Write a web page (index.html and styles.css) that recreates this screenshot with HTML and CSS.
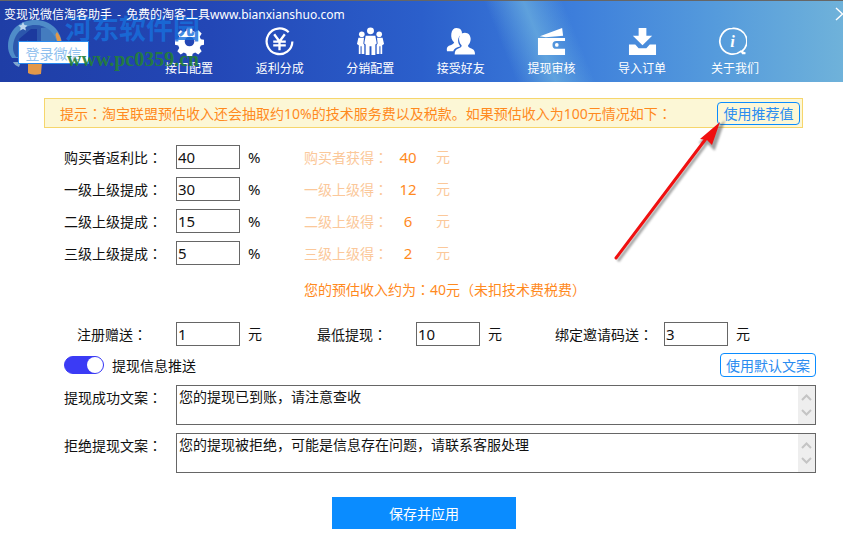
FILE: index.html
```html
<!DOCTYPE html>
<html lang="zh-CN">
<head>
<meta charset="utf-8">
<title>变现说微信淘客助手</title>
<link rel="stylesheet" href="styles.css">
</head>
<body>
<div class="app">
  <header class="header">
    <div class="title-row">
      <span class="title">变现说微信淘客助手 - 免费的淘客工具www.bianxianshuo.com</span>
      <svg class="close" width="8" height="14" viewBox="0 0 8 14"><path d="M1 1l6.500 6L1 13" fill="none" stroke="#fff" stroke-width="1.400"/></svg>
    </div>
    <div class="header-body">
      <svg class="logo" width="60" height="58" viewBox="0 0 60 58">
        <path d="M3 28C3 12 15 2 30 2s27 10 27 26c0 5-1 9-3 12H7c-3-4-4-8-4-12z" fill="#4f8cc8"/>
        <path d="M8 30C8 16 18 7 30 7s21 8 22 20l-4 12H11C9 36 8 33 8 30z" fill="#2c57ac"/>
        <path d="M8 44h8l-2 5c-3-1-5-3-6-5z" fill="#7fa6cf"/>
        <path d="M23 44h14l-1 12c-5 1-10 1-13-1z" fill="#e2984a"/>
        <path d="M52 14c4 5 5 10 5 16h-4c0-5-1-9-3-13z" fill="#e2984a"/>
        <path d="M14 21l12-10h6v29H23V22l-7 5z" fill="#1c3a9e"/>
        <path d="M36 10c10-2 15 2 15 10s-6 13-12 12v8h-3z" fill="#4f8cc8" opacity=".7"/>
        <path d="M18 4l1.500 3 3 .4-2.200 2 .6 3-2.900-1.500-2.900 1.500.6-3-2.200-2 3-.4z" fill="#bcd6ee"/>
      </svg>
      <button class="login" type="button">登录微信</button>
      <nav class="nav">
        <a class="nav-item">
          <svg class="nav-icon" width="30" height="30" viewBox="0 0 30 30"><path fill="#fff" fill-rule="evenodd" d="M12.500 1h5l.8 3.700 2.600 1.100 3.200-2 3.500 3.500-2 3.200 1.100 2.600 3.700.8v5l-3.700.8-1.100 2.600 2 3.200-3.500 3.500-3.200-2-2.600 1.100-.8 3.700h-5l-.8-3.700-2.600-1.100-3.200 2-3.500-3.500 2-3.200-1.100-2.600-3.700-.8v-5l3.700-.8 1.100-2.600-2-3.200 3.500-3.500 3.200 2 2.600-1.100zM15 10.500a5 5 0 1 0 0 10 5 5 0 0 0 0-10z" transform="translate(0 -.5)"/></svg>
          <span>接口配置</span>
        </a>
        <a class="nav-item">
          <svg class="nav-icon" width="30" height="30" viewBox="0 0 30 30"><path d="M24.500 5.500A13.300 13.300 0 1 0 28.300 15" fill="none" stroke="#fff" stroke-width="2.300"/><path d="M9.500 7.500l5.500 7.500 5.500-7.500M8.500 15.200h13M8.500 19h13M15 15v9" fill="none" stroke="#fff" stroke-width="2.400"/></svg>
          <span>返利分成</span>
        </a>
        <a class="nav-item">
          <svg class="nav-icon" width="30" height="30" viewBox="0 0 30 30"><g fill="#fff"><circle cx="15" cy="4" r="3.600"/><circle cx="6" cy="7.500" r="2.900"/><circle cx="24" cy="7.500" r="2.900"/><path d="M10 9h10l1.500 8-1.500 1v11h-4v-9h-2v9h-4V18l-1.500-1z"/><path d="M2.500 11h5.800L7.600 17l1 1.500V28H5.800v-8H4.700v8H2.900v-9L1 17.500zM21.700 11h5.800l1.500 6.500-1.900 1.500v9h-1.800v-8h-1.100v8h-2.800v-9.500l1-1.500z"/></g></svg>
          <span>分销配置</span>
        </a>
        <a class="nav-item">
          <svg class="nav-icon" width="30" height="30" viewBox="0 0 30 30"><g fill="#fff"><path d="M11 1c4 0 6 3 5.500 6.500-2.500 1-4 3.500-4 6.500 0 2.500 1 4.500 2.200 5.800-2.500 1-7 2.200-7 5.200H1c-.5-2.500 0-4.500 2-5.500 2-1 5-1.800 5.500-3.500C6 14 5 10.500 5.500 7 6 3 8 1 11 1z"/><path d="M19.500 6c3.800 0 6 3 6 6.500 0 2.500-1 5-2.600 6.500-.5 2 2 2.800 4.300 3.800 2 1 2.800 2.500 2.800 5.700H9c0-3.200.8-4.700 2.800-5.700 2.300-1 4.800-1.800 4.300-3.800-1.600-1.500-2.600-4-2.600-6.500C13.500 9 15.700 6 19.500 6z"/></g></svg>
          <span>接受好友</span>
        </a>
        <a class="nav-item">
          <svg class="nav-icon" width="30" height="30" viewBox="0 0 30 30"><path fill="#fff" fill-rule="evenodd" d="M3 9.500L26 1l1 8L9 10.500zM1 11.500h28V29H1zM29 14.500H20a4 4 0 0 0 0 8h9z"/><circle cx="20.500" cy="18.500" r="1.900" fill="#fff"/></svg>
          <span>提现审核</span>
        </a>
        <a class="nav-item">
          <svg class="nav-icon" width="30" height="30" viewBox="0 0 30 30"><path fill="#fff" d="M11 1h8v8h6L15 19 5 9h6zM1 18h6.500l3.500 4h8l3.500-4H29v11H1z"/></svg>
          <span>导入订单</span>
        </a>
        <a class="nav-item nav-last">
          <svg class="nav-icon info" width="30" height="30" viewBox="0 0 30 30"><path d="M15 1.500a13.300 13.300 0 1 0 8.500 23.700l4.800 2.100h-2.800l-1-1.900A13.300 13.300 0 0 0 15 1.500z" fill="none" stroke="#fff" stroke-width="1.800"/><text class="info-i" x="15" y="21">i</text></svg>
          <span>关于我们</span>
        </a>
      </nav>
    </div>
    <div class="watermark-cn">河东软件园</div>
    <div class="watermark-url">www.pc0359.cn</div>
  </header>

  <main class="main">
    <div class="notice">
      <span>提示<span class="c">：</span>淘宝联盟预估收入还会抽取约10%的技术服务费以及税款。如果预估收入为100元情况如下<span class="c">：</span></span>
      <button class="outline-btn notice-btn" type="button">使用推荐值</button>
    </div>

    <div class="rates">
      <label class="label">购买者返利比<span class="c">：</span></label><input class="field" value="40"><span class="unit">%</span>
      <span class="pale">购买者获得<span class="c">：</span></span><span class="amount">40</span><span class="pale">元</span>

      <label class="label">一级上级提成<span class="c">：</span></label><input class="field" value="30"><span class="unit">%</span>
      <span class="pale">一级上级得<span class="c">：</span></span><span class="amount">12</span><span class="pale">元</span>

      <label class="label">二级上级提成<span class="c">：</span></label><input class="field" value="15"><span class="unit">%</span>
      <span class="pale">二级上级得<span class="c">：</span></span><span class="amount">6</span><span class="pale">元</span>

      <label class="label">三级上级提成<span class="c">：</span></label><input class="field" value="5"><span class="unit">%</span>
      <span class="pale">三级上级得<span class="c">：</span></span><span class="amount">2</span><span class="pale">元</span>
    </div>

    <p class="estimate">您的预估收入约为<span class="c">：</span>40元<span class="c">（</span>未扣技术费税费<span class="c">）</span></p>

    <div class="bonus-row">
      <label class="label bonus-first">注册赠送<span class="c">：</span></label><input class="field" value="1"><span class="unit bonus-unit">元</span>
      <label class="label bonus-second">最低提现<span class="c">：</span></label><input class="field" value="10"><span class="unit bonus-unit">元</span>
      <label class="label bonus-third">绑定邀请码送<span class="c">：</span></label><input class="field" value="3"><span class="unit">元</span>
    </div>

    <div class="push-row">
      <span class="toggle"><span class="knob"></span></span>
      <span class="push-label">提现信息推送</span>
      <button class="outline-btn default-btn" type="button">使用默认文案</button>
    </div>

    <div class="text-row">
      <label class="label">提现成功文案<span class="c">：</span></label>
      <div class="memo">
        <div class="memo-text">您的提现已到账，请注意查收</div>
        <div class="scroll">
          <svg width="13" height="8" viewBox="0 0 13 8"><path d="M2 7l4.500-4.500L11 7" fill="none" stroke="#c4c4c4" stroke-width="2"/></svg>
          <svg width="13" height="8" viewBox="0 0 13 8"><path d="M2 1l4.500 4.500L11 1" fill="none" stroke="#c4c4c4" stroke-width="2"/></svg>
        </div>
      </div>
    </div>
    <div class="text-row">
      <label class="label">拒绝提现文案<span class="c">：</span></label>
      <div class="memo">
        <div class="memo-text">您的提现被拒绝，可能是信息存在问题，请联系客服处理</div>
        <div class="scroll">
          <svg width="13" height="8" viewBox="0 0 13 8"><path d="M2 7l4.500-4.500L11 7" fill="none" stroke="#c4c4c4" stroke-width="2"/></svg>
          <svg width="13" height="8" viewBox="0 0 13 8"><path d="M2 1l4.500 4.500L11 1" fill="none" stroke="#c4c4c4" stroke-width="2"/></svg>
        </div>
      </div>
    </div>

    <button class="save" type="button">保存并应用</button>
  </main>

  <svg class="arrow" width="843" height="537" viewBox="0 0 843 537">
    <path class="arrow-shadow" d="M616 258L707 137M720 122l-20 17 7 1 5 5z"/>
    <path class="arrow-line" d="M616 258L708 136"/>
    <path class="arrow-head" d="M720 122l-20 17 7 1 5 5z"/>
  </svg>
</div>
</body>
</html>
```
FILE: styles.css
```css
* { box-sizing: border-box; }
html, body { margin: 0; padding: 0; background: #fff; }
body {
  width: 843px;
  height: 537px;
  overflow: hidden;
  font-family: "Noto Sans", "Noto Sans CJK SC", sans-serif;
  font-size: 14px;
  color: #111;
}
.app { position: relative; width: 843px; height: 537px; }
.c { font-family: "Noto Sans CJK TC", sans-serif; font-feature-settings: "locl" 0; }

/* header */
.header {
  position: relative;
  height: 82px;
  border-top: 1px solid #666;
  overflow: hidden;
  color: #fff;
  background:
    linear-gradient(68deg, rgba(120,190,225,0) 59%, rgba(120,190,225,.6) 63.500%, rgba(120,190,225,0) 68%),
    linear-gradient(90deg, #1f3ea6 0%, #2347b6 25%, #2b5fcb 50%, #3d7edb 68%, #559bdc 85%, #6fb2da 100%);
}
.title-row { height: 26px; display: flex; justify-content: space-between; padding: 6px 0 0 4px; }
.title { font-size: 12px; line-height: 16px; word-spacing: 2px; white-space: nowrap; position: relative; z-index: 3; }
.close { margin-top: 0; }
.header-body { display: flex; height: 55px; }
.logo { position: absolute; left: 5px; top: 17px; }
.login {
  position: relative;
  margin: 14px 0 0 18px;
  width: 71px;
  height: 23px;
  padding: 0;
  border: 1px solid #2a8bf0;
  background: #fff;
  color: #8fbfee;
  font: 14px "Noto Sans CJK SC", sans-serif;
}
.nav { display: flex; margin-left: 54.800px; }
.nav-item { width: 90.600px; display: flex; flex-direction: column; align-items: center; }
.nav-last { margin-left: 2.400px; }
.nav-item span { font-size: 12px; line-height: 16px; margin-top: 5px; }
.nav-icon { display: block; width: 29px; height: 29px; }
.info { transform: translateX(-3px); }
.info-i { font: italic bold 17px "Liberation Serif", serif; fill: #fff; text-anchor: middle; }
.watermark-cn {
  position: absolute;
  left: 65px;
  top: 11px;
  font: bold 27px/32px "Noto Sans CJK SC", sans-serif;
  color: rgba(24,112,220,.82);
  white-space: nowrap;
}
.watermark-url {
  position: absolute;
  left: 67px;
  top: 47px;
  font: bold 20px/22px "Liberation Serif", serif;
  color: rgba(36,128,56,.92);
  white-space: nowrap;
}

/* main */
.main { padding: 16px 27px 0 44px; }
.notice {
  display: flex;
  align-items: center;
  justify-content: space-between;
  width: 759px;
  height: 30px;
  padding: 0 2px 0 15px;
  background: #fcf7d6;
  border: 1px solid #f6d66c;
  color: #ff8a1e;
  line-height: 20px;
}
.outline-btn {
  padding: 0;
  height: 24px;
  background: #fff;
  border: 1px solid #0a8cff;
  border-radius: 4px;
  color: #2a8cf0;
  font: 14px "Noto Sans CJK SC", sans-serif;
}
.notice-btn { width: 83px; height: 23px; background: transparent; }
.label { line-height: 24px; white-space: nowrap; }
.field {
  width: 64px;
  height: 24px;
  padding: 0 0 0 1px;
  border: 1px solid #666;
  border-radius: 0;
  background: #fff;
  color: #111;
  font: 15px "Noto Sans", sans-serif;
  outline: 0;
}

.rates {
  display: grid;
  grid-template-columns: 112px 64px 64px 82px 44px 30px;
  grid-auto-rows: 24px;
  row-gap: 8px;
  align-items: center;
  margin: 17px 0 0 20px;
}
.unit { padding-left: 8px; line-height: 24px; font-size: 15px; }
.bonus-row .unit { font-size: 14px; }
.pale { color: #fbc89a; line-height: 24px; white-space: nowrap; }
.amount { color: #ff8a1e; text-align: center; font-size: 15px; line-height: 24px; }
.rates .amount + .pale { padding-left: 6px; }

.estimate { margin: 14px 0 0 260px; height: 20px; line-height: 20px; color: #ff8a1e; }

.bonus-row { display: flex; align-items: center; margin: 23px 0 0 20px; height: 24px; }
.bonus-first { width: 112px; padding-left: 13px; }
.bonus-unit { width: 77px; }
.bonus-second { width: 99px; }
.bonus-unit + .bonus-third { width: 109px; margin-left: -2px; }

.push-row { display: flex; align-items: center; margin: 7px 0 0 20px; height: 24px; }
.toggle {
  display: block;
  width: 40px;
  height: 18px;
  padding: 1px;
  border-radius: 9px;
  background: #3b3bf5;
  border: 1px solid #3b3bf5;
}
.knob { display: block; width: 14px; height: 14px; margin: 0 0 0 22px; border-radius: 50%; background: #fff; box-shadow: 0 0 0 1px #fff; }
.push-label { margin-left: 8px; flex: 1; }
.default-btn { width: 96px; }

.text-row { display: flex; margin: 8px 0 0 20px; height: 40px; }
.text-row .label { width: 112px; }
.memo { display: flex; width: 640px; height: 40px; border: 1px solid #666; }
.memo-text { flex: 1; padding: 0 2px; line-height: 22px; }
.scroll {
  width: 17px;
  background: #eeeeee;
  display: flex;
  flex-direction: column;
  justify-content: space-between;
  align-items: center;
  padding: 7px 0;
}
.save {
  display: block;
  width: 184px;
  height: 32px;
  margin: 24px 0 0 288px;
  border: 0;
  background: #0a8cff;
  color: #fff;
  font: 14px "Noto Sans CJK SC", sans-serif;
}

/* annotation arrow */
.arrow { position: absolute; left: 0; top: 0; pointer-events: none; }
.arrow-shadow { fill: #555; stroke: #555; stroke-width: 3; opacity: .55; transform: translate(2px, 3px); filter: blur(1.200px); }
.arrow-line { fill: none; stroke: #f01010; stroke-width: 3; stroke-linecap: round; }
.arrow-head { fill: #f01010; }
```
